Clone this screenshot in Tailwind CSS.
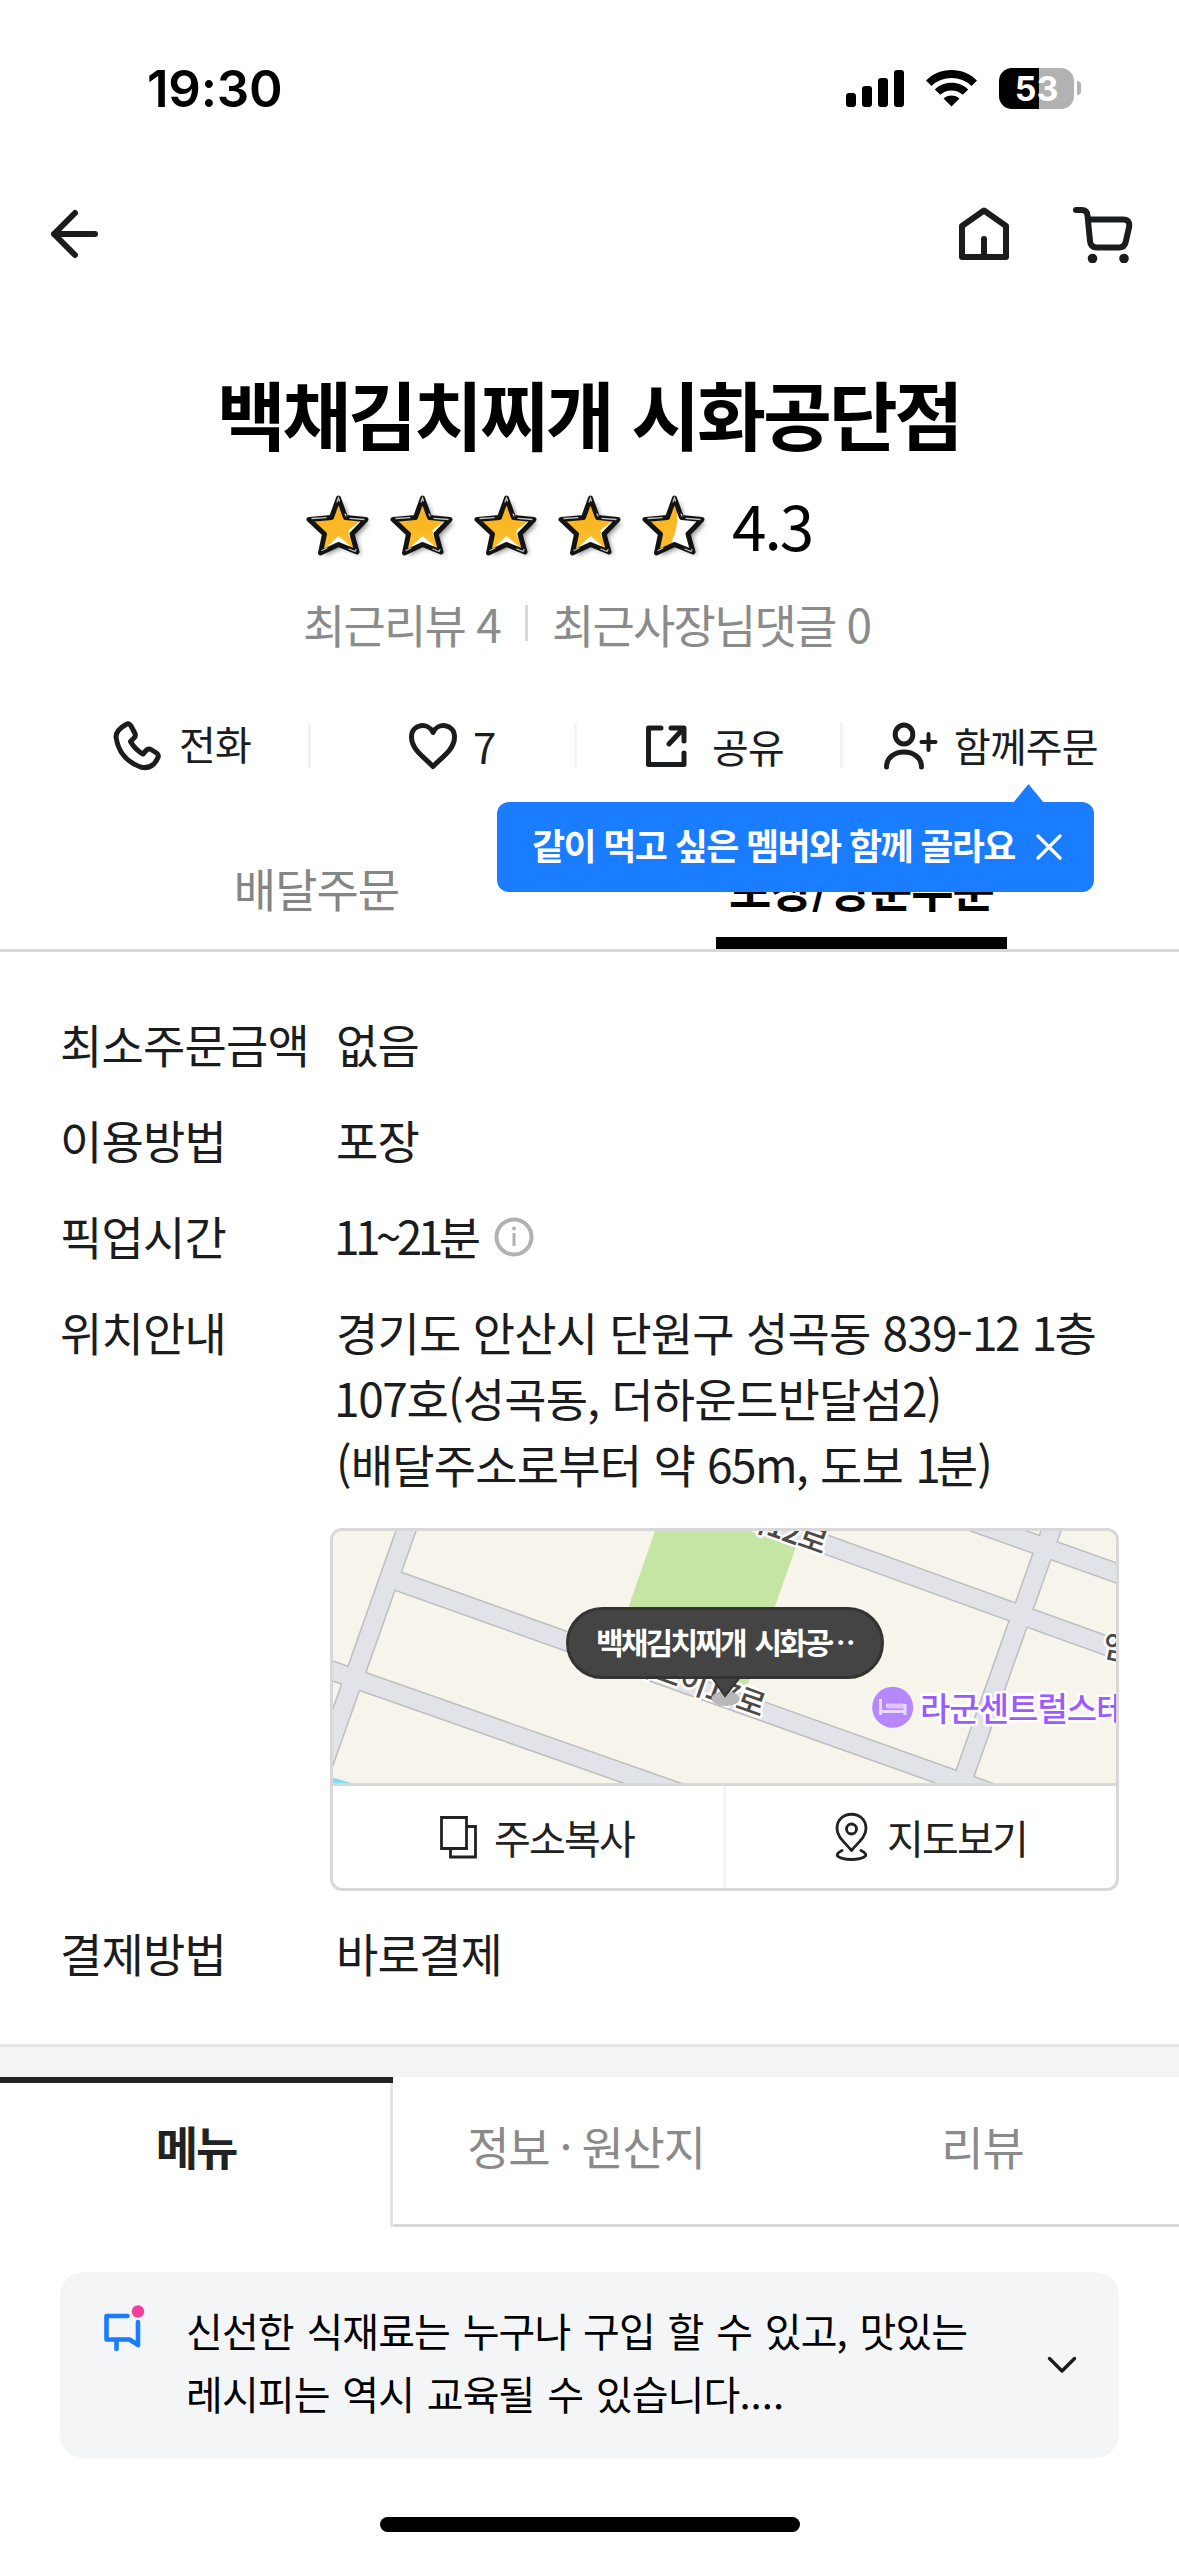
<!DOCTYPE html>
<html lang="ko">
<head>
<meta charset="utf-8">
<title>백채김치찌개 시화공단점</title>
<script src="https://cdn.jsdelivr.net/npm/@tailwindcss/browser@4"></script>
</head>
<body class="bg-white">
<svg width="0" height="0" class="absolute">
  <defs>
    <filter id="soft" x="-30%" y="-30%" width="160%" height="160%"><feGaussianBlur stdDeviation="2.5"/></filter>
    <linearGradient id="gold" x1="0" y1="0" x2="0" y2="1"><stop offset="0" stop-color="#f9b01c"/><stop offset="1" stop-color="#fdbf2d"/></linearGradient>
    <g id="starFrame">
      <path d="M38.500 9L45.500 28.500L66 30.500L52 45L57 63L38.500 55.500L20.500 64L24.500 45L9 30.500L31.500 28.500Z" fill="none" stroke="#131313" stroke-width="5" stroke-linejoin="round"/>
      <path d="M37 13l1.500-4 1 3M12 29.500l14-.8M50 29.300l14 1.200M56 60.500l-1 2-6-2.500M22 61.500l5-2.500M45 25l1 2" fill="none" stroke="#fff" stroke-opacity=".75" stroke-width="1.300" stroke-linecap="round"/>
    </g>
    <path id="starShape" d="M38.500 9L45.500 28.500L66 30.500L52 45L57 63L38.500 55.500L20.500 64L24.500 45L9 30.500L31.500 28.500Z"/>
    <g id="star">
      <use href="#starShape" x="4" y="3" fill="#000" opacity=".45" filter="url(#soft)"/>
      <use href="#starShape" fill="url(#gold)"/>
      <path d="M63 32L50 45L53 51L50 42ZM29 58L38.500 49L48 57L38.500 54Z" fill="#fff" stroke="#fff" stroke-width="3" stroke-linejoin="round"/>
      <use href="#starFrame"/>
    </g>
  </defs>
</svg>
<div class="flex h-[2556px] w-[1179px] flex-col overflow-hidden bg-white font-['Noto_Sans_CJK_KR',sans-serif] text-[#1b1c1e]">

  <!-- status bar -->
  <div class="flex h-[176px] items-center justify-between pr-[98px] pl-[147px]">
    <span class="font-['Inter',sans-serif] text-[51px] leading-none font-semibold tracking-[-0.200px] text-black">19:30</span>
    <div class="flex items-center gap-[22px]">
      <svg class="h-[37px] w-[58px]" viewBox="0 0 58 37"><rect y="23" width="10" height="14" rx="3"/><rect x="16" y="16" width="10" height="21" rx="3"/><rect x="32" y="8" width="10" height="29" rx="3"/><rect x="48" width="10" height="37" rx="3"/></svg>
      <svg class="h-[37px] w-[51px]" viewBox="0 0 51 37"><path d="M25.500 0C35.500 0 44.500 4 51 10.500L45.500 16A29 29 0 0 0 5.500 16L0 10.500C6.500 4 15.500 0 25.500 0ZM25.500 12.800C32 12.800 37.800 15.300 42.200 19.400L36.700 24.800A16.500 16.500 0 0 0 14.300 24.800L8.800 19.400C13.200 15.300 19 12.800 25.500 12.800ZM25.500 25.500C28.500 25.500 31.300 26.500 33.500 28.500L25.500 36.500L17.500 28.500C19.700 26.500 22.500 25.500 25.500 25.500Z"/></svg>
      <div class="flex items-center gap-[3px]">
        <div class="flex h-[41px] w-[75px] items-center justify-center rounded-[13px] bg-linear-to-r from-black from-[53.300%] to-[#b2b2b2] to-[53.300%] pt-px font-['Inter',sans-serif] text-[34px] leading-none font-bold text-white">53</div>
        <div class="h-[14px] w-[4px] rounded-r-full bg-[#b2b2b2]"></div>
      </div>
    </div>
  </div>

  <!-- navigation -->
  <div class="flex h-[118px] items-center justify-between px-[46px] pb-[2px]">
    <svg class="h-[50px] w-[56px]" viewBox="0 0 56 50" fill="none" stroke="#1b1c1e" stroke-width="6" stroke-linecap="round" stroke-linejoin="round"><path d="M49 25H8M29 4L8 25L29 46"/></svg>
    <div class="flex items-center gap-[61px]">
      <svg class="h-[58px] w-[52px]" viewBox="0 0 52 58" fill="none" stroke="#1b1c1e" stroke-width="6" stroke-linejoin="round"><path d="M4 21L26 5.500L48 21V52H4Z"/><path d="M26 34V50" stroke-linecap="round"/></svg>
      <svg class="h-[58px] w-[62px]" viewBox="0 0 62 58" fill="none" stroke="#1b1c1e" stroke-width="6" stroke-linecap="round" stroke-linejoin="round"><path d="M5 5H10.500Q16 5 16.500 10.500L19 36Q19.500 42.500 26 42.500H48Q53.500 42.500 54.700 37L58 22.500Q59.500 14.500 52 14.500H18"/><circle cx="21.500" cy="53.500" r="4.800" fill="#1b1c1e" stroke="none"/><circle cx="53" cy="53.500" r="4.800" fill="#1b1c1e" stroke="none"/></svg>
    </div>
  </div>

  <!-- store heading -->
  <div class="flex h-[398px] flex-col items-center">
    <h1 class="mt-[64px] pr-[2px] text-[75px] leading-[110px] font-bold tracking-[-3.200px] whitespace-nowrap text-black [word-spacing:2px]">백채김치찌개 시화공단점</h1>
    <div class="mt-[17px] flex h-[80px] w-full items-center pl-[300px]">
      <svg class="h-[72px] w-[420px]" viewBox="0 0 420 72">
        <use href="#star"/><use href="#star" x="84"/><use href="#star" x="168"/><use href="#star" x="252"/>
        <g transform="translate(336 0)">
          <use href="#starShape" x="4" y="3" opacity=".45" filter="url(#soft)"/>
          <use href="#starShape" fill="#fff"/>
          <path d="M38.500 9L41 18Q43 36 36 52L36 55L20.500 63L25 45L9 31L31.500 29Z" fill="url(#gold)"/>
          <use href="#starFrame"/>
        </g>
      </svg>
      <span class="mb-[2px] ml-[12px] text-[62px] leading-[80px] tracking-[-2px] text-black">4.3</span>
    </div>
    <div class="mt-[26px] flex h-[64px] w-full items-center pl-[303px] text-[46px] tracking-[-1.800px] whitespace-nowrap text-[#8b8b8b]">
      <span>최근리뷰 4</span>
      <i class="mr-[24px] ml-[25px] h-[36px] w-[3px] bg-[#d8d8d8]"></i>
      <span>최근사장님댓글 0</span>
    </div>
  </div>

  <!-- quick actions -->
  <div class="relative flex h-[107px] items-center text-[40px] tracking-[-0.800px] whitespace-nowrap">
    <div class="flex h-[45px] w-[311px] items-center border-r-3 border-[#f3f3f3] pl-[113px]">
      <svg class="h-[50px] w-[48px]" viewBox="0 0 48 50" fill="none" stroke="#1b1c1e" stroke-width="5" stroke-linejoin="round"><path d="M13 3.500Q16 1.500 18 5L22 12.500Q23 15 21 17L17.500 20.500Q22 28.500 30 33L33.500 29Q35.500 27.500 38 28.500L43.500 32Q46.500 34 44.500 37.500Q39 49 27.500 46Q6 38 3 16Q3 9 13 3.500Z"/></svg>
      <span class="mb-[5px] ml-[18px]">전화</span>
    </div>
    <div class="flex h-[45px] w-[266px] items-center border-r-3 border-[#f3f3f3] pl-[97px]">
      <svg class="h-[48px] w-[50px]" viewBox="0 0 50 48" fill="none" stroke="#1b1c1e" stroke-width="5" stroke-linejoin="round"><path d="M25 10.500C20.500 0 3.500 1.500 3.500 15C3.500 27.500 16 35 25 44.500C34 35 46.500 27.500 46.500 15C46.500 1.500 29.500 0 25 10.500Z"/></svg>
      <span class="ml-[15px] text-[42px]">7</span>
    </div>
    <div class="flex h-[45px] w-[266px] items-center border-r-3 border-[#f3f3f3] pl-[68px]">
      <svg class="h-[44px] w-[44px]" viewBox="0 0 44 44" fill="none" stroke="#1b1c1e" stroke-width="5" stroke-linecap="round" stroke-linejoin="round"><path d="M16 4H3.500V40.500H39V29M26 4H39V17M38 5L24 20"/></svg>
      <span class="ml-[23px]">공유</span>
    </div>
    <div class="flex h-[45px] items-center pl-[40px]">
      <svg class="h-[48px] w-[56px]" viewBox="0 0 56 48" fill="none" stroke="#1b1c1e" stroke-width="5" stroke-linecap="round"><ellipse cx="21" cy="12.500" rx="8.800" ry="9.500"/><path d="M3.500 45C3.500 25 38.500 25 38.500 45"/><path d="M38.500 20H52.500M45.500 12V28" stroke-width="4"/></svg>
      <span class="mb-[2px] ml-[15px] tracking-[-0.900px]">함께주문</span>
    </div>

    <!-- tooltip over the order tabs -->
    <div class="absolute top-[110px] left-[497px] z-10 flex h-[90px] w-[597px] items-center rounded-[12px] bg-[#1a7cff] pb-[7px] pl-[35px] text-white">
      <svg class="absolute -top-[18px] left-[516px] h-[19px] w-[31px]" viewBox="0 0 31 19"><path d="M0 19L15.500 0L31 19Z" fill="#1a7cff"/></svg>
      <span class="text-[36px] font-bold tracking-[-1.650px]">같이 먹고 싶은 멤버와 함께 골라요</span>
      <svg class="absolute top-[32px] left-[539px] h-[26px] w-[26px]" viewBox="0 0 26 26" stroke="#fff" stroke-width="3.200" stroke-linecap="round"><path d="M2 2L24 24M24 2L2 24"/></svg>
    </div>
  </div>

  <!-- order type tabs -->
  <div class="flex h-[153px] border-b-3 border-[#d8d8d8] text-[46px] leading-[66px] whitespace-nowrap">
    <div class="flex w-[633px] justify-center pt-[55px] tracking-[-1px] text-[#858585]">배달주문</div>
    <div class="ml-[83px] flex h-full w-[291px] justify-center border-b-12 border-black pt-[55px] font-bold tracking-[-1px] text-black">포장/방문주문</div>
  </div>

  <!-- pickup details -->
  <dl class="grid grid-cols-[276px_1fr] gap-y-[30px] pt-[58px] pl-[60px] text-[46px] leading-[66px] tracking-[-0.800px] whitespace-nowrap">
    <dt>최소주문금액</dt><dd>없음</dd>
    <dt>이용방법</dt><dd>포장</dd>
    <dt>픽업시간</dt>
    <dd class="flex items-center"><span class="-ml-[2px] tracking-[-4.600px]">11~21</span>분
      <svg class="mt-[3px] ml-[14px] h-[40px] w-[40px]" viewBox="0 0 40 40" fill="none" stroke="#b0b1b3" stroke-width="4"><circle cx="20" cy="20" r="17.500"/><path d="M20 16V29" stroke-width="3"/><circle cx="20" cy="11.500" r="2" fill="#b0b1b3" stroke="none"/></svg>
    </dd>
    <dt>위치안내</dt>
    <dd>경기도 안산시 단원구 성곡동 839-<span class="tracking-[-2.500px] [word-spacing:3px]">12 1</span>층<br><span class="-ml-[2px] tracking-[-1.400px]">107</span>호(성곡동, 더하운드반달섬2)<br>(배달주소로부터 약 <span class="tracking-[-1.600px]">65m</span>, 도보 <span class="tracking-[-5px]">1</span>분)</dd>
  </dl>

  <!-- map card -->
  <div class="mt-[32px] ml-[330px] h-[363px] w-[789px] overflow-hidden rounded-[12px] border-3 border-[#d8d8d8]">
    <svg class="block h-[252px] w-[783px]" viewBox="333 1531 783 252" font-family="'Noto Sans CJK KR',sans-serif">
      <rect x="333" y="1531" width="783" height="252" fill="#f7f4eb"/>
      <path d="M655 1531H750L796 1546.700L747 1686L617 1640Z" fill="#c4e5a4"/>
      <path d="M333 1777.500L351 1783H333Z" fill="#86dbf7"/>
      <g fill="none" stroke="#bdbebf" stroke-width="20.500"><path d="M413 1511L311 1799M392 1579L1000 1796M300 1659.500L760 1821M740 1513.500L1150 1661.500M930 1506.500L1150 1585M1058 1511L962 1782"/></g>
      <g fill="none" stroke="#e1e3e8" stroke-width="17.500"><path d="M413 1511L311 1799M391 1578.700L1000 1796M300 1659.500L760 1821M740 1513.500L1150 1661.500M930 1506.500L1150 1585M1058 1511L962 1782"/></g>
      <g font-size="31" font-weight="500" fill="#4f4946" stroke="#fff" stroke-width="5" stroke-linejoin="round" paint-order="stroke" letter-spacing="-1">
        <text transform="translate(760 1717) rotate(19.600)" text-anchor="end">엠티브이17로</text>
        <text transform="translate(822 1554.500) rotate(19.600)" text-anchor="end">엠티브이12로</text>
        <text transform="translate(1101 1656) rotate(12)">엠티브이</text>
      </g>
      <circle cx="892.700" cy="1707.300" r="20.500" fill="#b688ff"/>
      <path d="M880.500 1699V1715M880.500 1711.500H905V1715M905 1711V1705.500H886" fill="none" stroke="#ead9ff" stroke-width="3"/>
      <path d="M887 1703.500H903V1708.500H887Z" fill="#dcc3ff"/>
      <text x="920" y="1720.500" font-size="33" font-weight="500" letter-spacing="-1" fill="#9b5cff" stroke="#fff" stroke-width="5" stroke-linejoin="round" paint-order="stroke">라군센트럴스테이</text>
      <ellipse cx="725.500" cy="1698.500" rx="14" ry="7.500" fill="#b7b7b7"/>
      <path d="M711 1676L725 1696L741 1676Z" fill="#444" stroke="#333" stroke-width="2"/>
      <rect x="567.500" y="1608.500" width="315" height="69" rx="34.500" fill="#444" stroke="#333" stroke-width="3"/>
      <text x="596" y="1654" font-size="30" font-weight="700" letter-spacing="-2.800" word-spacing="4" fill="#fff">백채김치찌개 시화공<tspan dx="-3">⋯</tspan></text>
    </svg>
    <div class="flex h-[105px] border-t-3 border-[#d8d8d8] text-[40px] tracking-[-1.800px] text-[#222]">
      <div class="flex w-[393px] items-center border-r-3 border-[#f4f4f4] pl-[107px]">
        <svg class="h-[44px] w-[37px]" viewBox="0 0 37 44" fill="none" stroke="#222" stroke-width="2.800"><path d="M1.500 2.500H26.500V33.500H1.500ZM27 11.500H35.500V42H10.500V33.500"/></svg>
        <span class="ml-[17px]">주소복사</span>
      </div>
      <div class="flex items-center pl-[109px]">
        <svg class="h-[50px] w-[33px]" viewBox="0 0 33 50" fill="none" stroke="#222" stroke-width="2.800" stroke-linecap="round" stroke-linejoin="round"><path d="M16.500 38.500C10 30.500 2 25 2 16.500C2 -2.500 31 -2.500 31 16.500C31 25 23 30.500 16.500 38.500Z"/><circle cx="16.500" cy="17" r="5"/><path d="M7 38.500C-3 43 4 47.500 16.500 47.500S36 43 26 38.500"/></svg>
        <span class="ml-[19px]">지도보기</span>
      </div>
    </div>
  </div>

  <div class="grid h-[153px] grid-cols-[276px_1fr] pt-[28px] pl-[60px] text-[46px] leading-[66px] tracking-[-0.800px]">
    <span>결제방법</span><span>바로결제</span>
  </div>

  <div class="h-[33px] border-t-3 border-[#e5e5e5] bg-[#f4f4f4]"></div>

  <!-- content tabs -->
  <div class="flex h-[150px] text-[46px] leading-[66px] tracking-[-1px] whitespace-nowrap text-[#8a8a8a]">
    <div class="flex w-[393px] flex-col">
      <div class="h-[6px] bg-[#222]"></div>
      <div class="flex flex-1 justify-center border-r-3 border-[#e5e5e5] pt-[29px] pl-[2px] font-bold tracking-[-2px] text-[#222]">메뉴</div>
    </div>
    <div class="flex w-[786px] border-b-3 border-[#d8d8d8] pt-[35px]">
      <div class="flex w-1/2 justify-center pr-[7px] tracking-[-1.200px] [word-spacing:-1.500px]">정보 · 원산지</div>
      <div class="flex w-1/2 justify-center">리뷰</div>
    </div>
  </div>

  <!-- notice -->
  <div class="mt-[45px] ml-[60px] flex h-[186px] w-[1059px] items-center rounded-[24px] bg-[#f3f5f7] pr-[42px] pl-[42px] text-black">
    <svg class="mb-[75px] h-[50px] w-[44px]" viewBox="0 0 44 50" fill="none" stroke="#1a7cff" stroke-width="4.600" stroke-linecap="round" stroke-linejoin="round"><path d="M25.500 13H4.500V36.500H27.500L36 42V19M14.500 37V46"/><circle cx="36" cy="8.500" r="6.200" fill="#f23da0" stroke="none"/></svg>
    <p class="mb-[7px] ml-[40px] flex-1 text-[40px] leading-[63px] tracking-[-0.900px] whitespace-nowrap [word-spacing:2.400px]">신선한 식재료는 누구나 구입 할 수 있고, 맛있는<br>레시피는 역시 교육될 수 있습니다<span class="tracking-normal">....</span></p>
    <svg class="h-[18px] w-[30px]" viewBox="0 0 30 18" fill="none" stroke="#1b1c1e" stroke-width="3.400" stroke-linecap="round" stroke-linejoin="round"><path d="M2.500 2.500L15 15L27.500 2.500"/></svg>
  </div>

  <div class="mt-[59px] ml-[380px] h-[15px] w-[420px] rounded-full bg-black"></div>
</div>
</body>
</html>
